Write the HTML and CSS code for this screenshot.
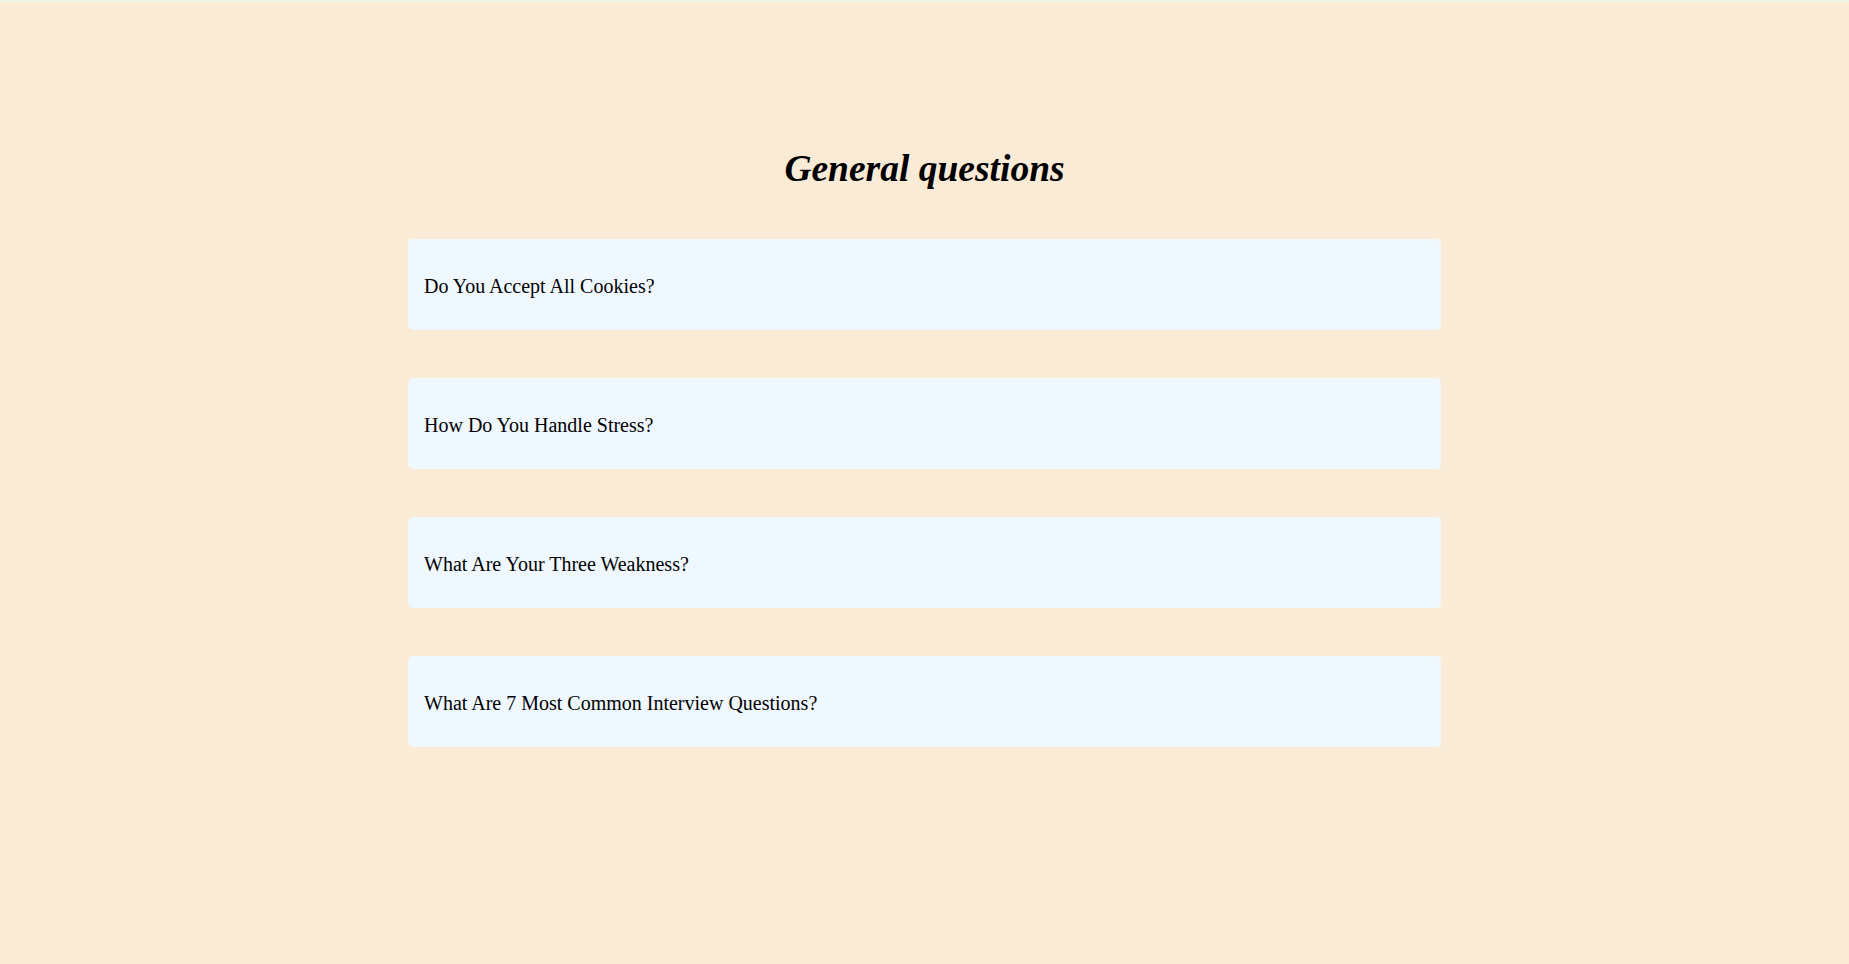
FILE: index.html
```html
<!DOCTYPE html>
<html>
<head>
<meta charset="utf-8">
<link rel="stylesheet" href="styles.css">
</head>
<body>
<div class="topline"></div>
<main class="faq">
  <h1 class="title">General questions</h1>
  <div class="list">
    <div class="item">Do You Accept All Cookies?</div>
    <div class="item">How Do You Handle Stress?</div>
    <div class="item">What Are Your Three Weakness?</div>
    <div class="item">What Are 7 Most Common Interview Questions?</div>
  </div>
</main>
</body>
</html>
```

FILE: styles.css
```css
html, body {
  margin: 0;
  padding: 0;
}
body {
  background: #faebd7;
  font-family: "Liberation Serif", serif;
  color: #000;
  min-height: 964px;
}
.topline {
  height: 2px;
  background: #eff3e6;
}
.faq {
  width: 1033px;
  margin: 0 auto;
  padding-top: 144px;
}
.title {
  margin: 0 0 47px;
  text-align: center;
  font-size: 37.5px;
  font-style: italic;
  font-weight: bold;
  line-height: 46px;
}
.list {
  display: flex;
  flex-direction: column;
  gap: 48px;
}
.item {
  height: 91px;
  box-sizing: border-box;
  background: #f0f8ff;
  border-radius: 5px;
  padding: 3px 16px 0;
  display: flex;
  align-items: center;
  font-size: 20px;
}
```
